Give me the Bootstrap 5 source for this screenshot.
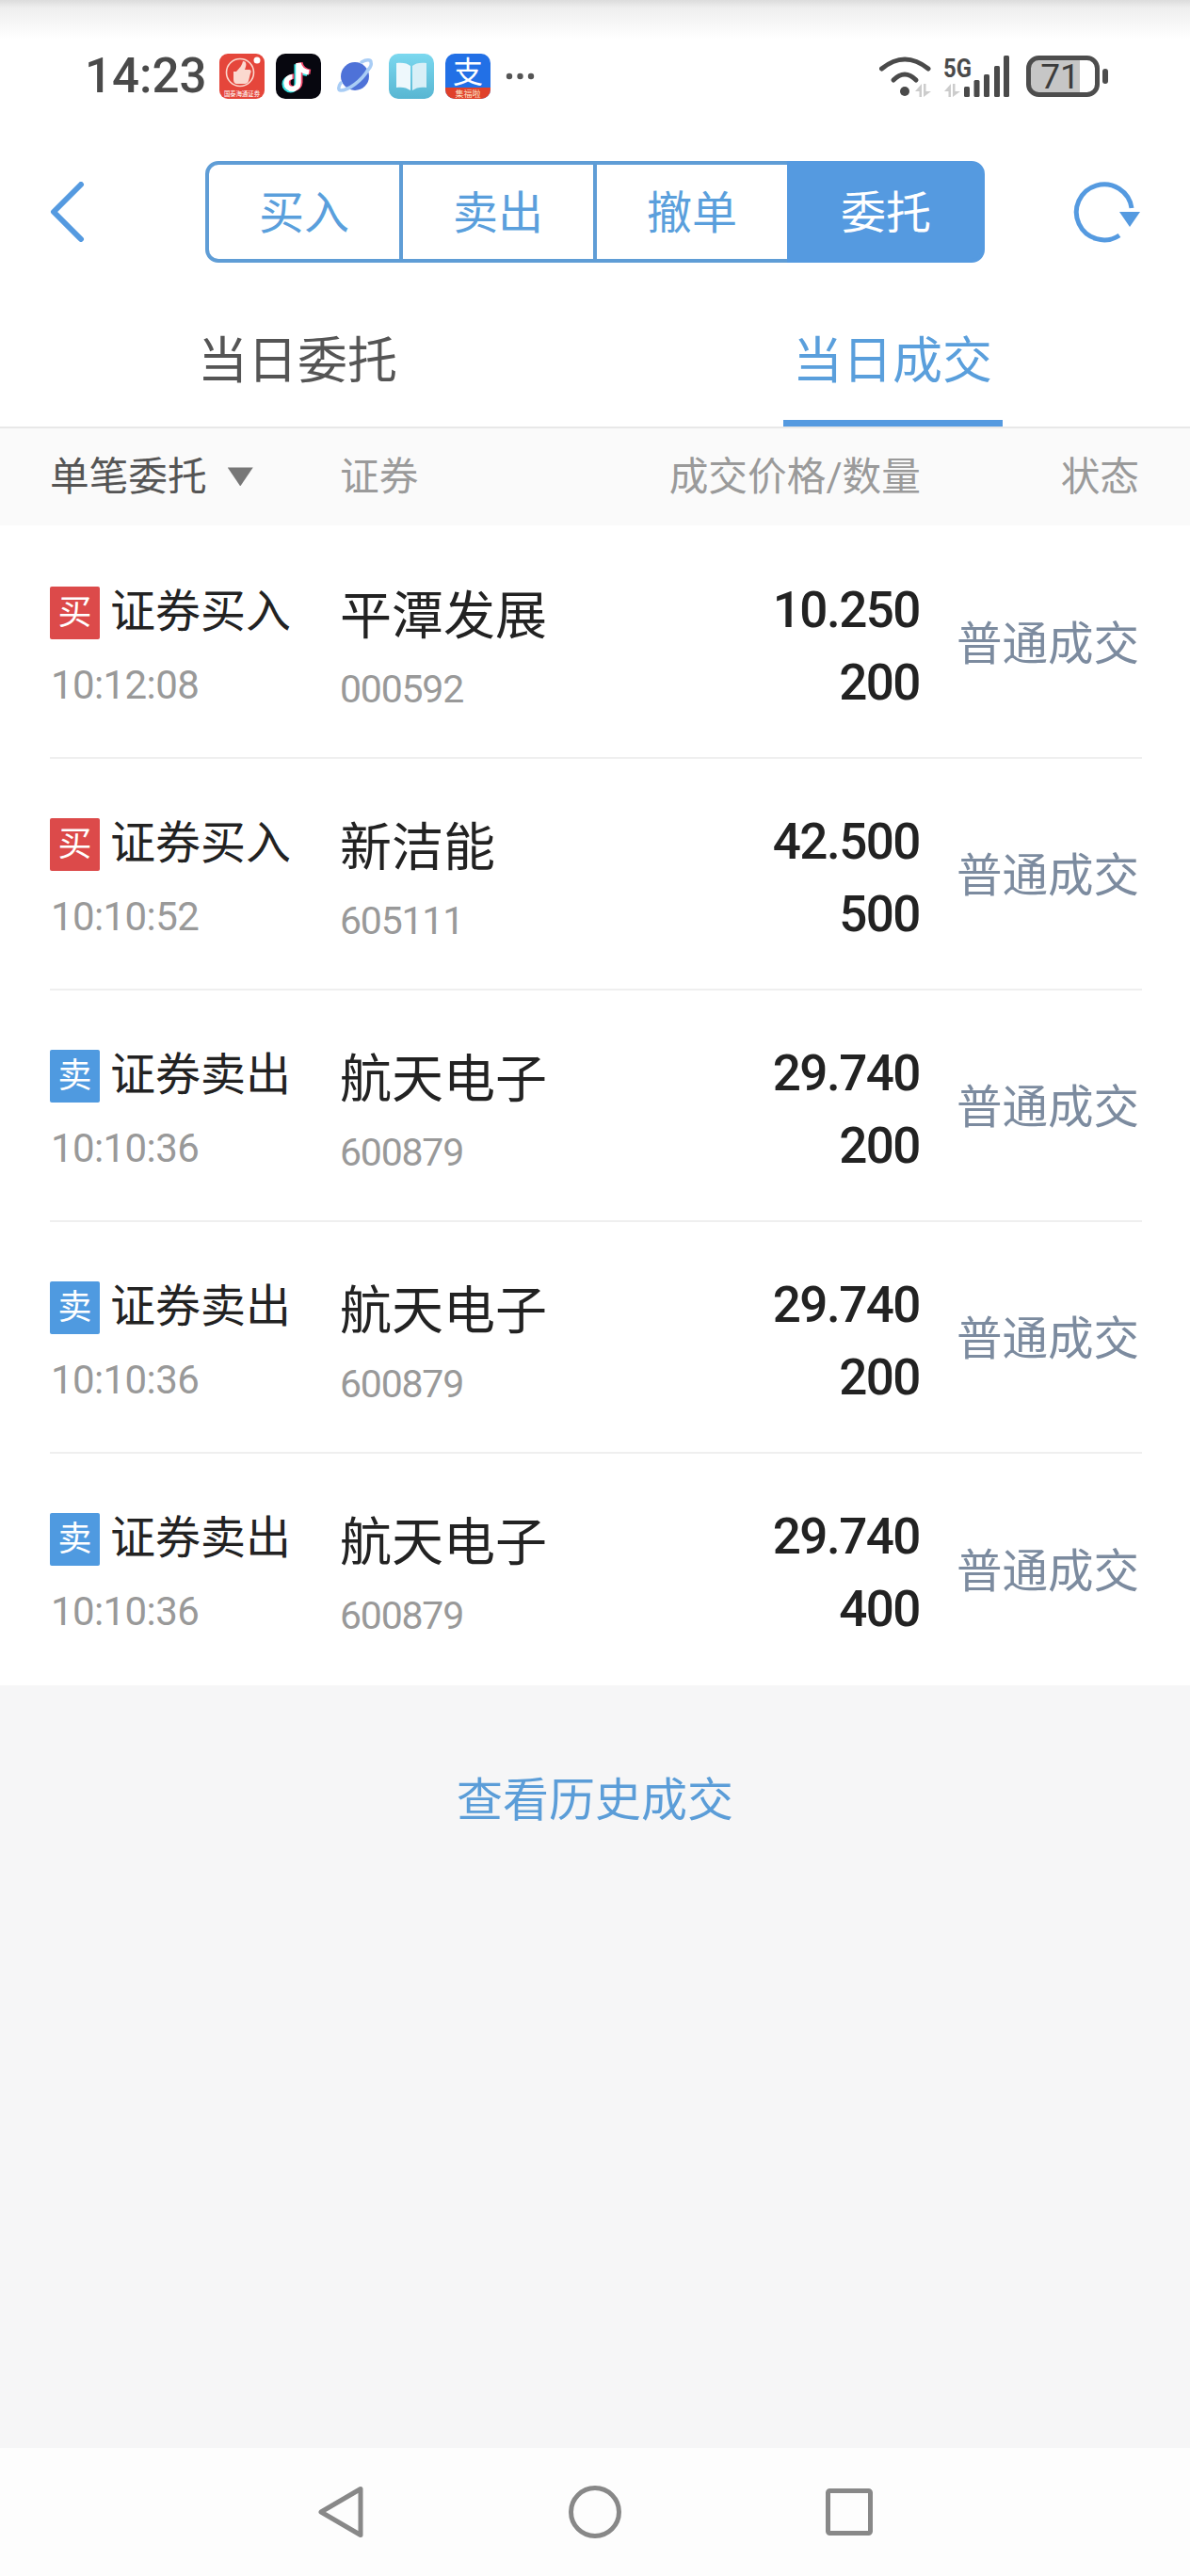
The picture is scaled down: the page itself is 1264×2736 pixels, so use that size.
<!DOCTYPE html>
<html lang="zh-CN">
<head>
  <meta charset="UTF-8" />
  <meta name="viewport" content="width=device-width, initial-scale=1.0" />
  <title>当日成交</title>
  <link href="https://cdn.jsdelivr.net/npm/bootstrap@5.3.0/dist/css/bootstrap.min.css" rel="stylesheet">
  <style>
    body {
      font-family: Roboto, "Noto Sans CJK SC", sans-serif;
      background-color: #f6f6f7;
      min-height: 2736px;
    }
    .status-strip {
      height: 162px;
      padding: 0 86px 0 90px;
      background: linear-gradient(#dcdcdc 0, #eeeeee 8px, #ffffff 42px);
    }
    .clock {
      font-size: 51px;
      font-weight: 500;
      line-height: 60px;
      color: #4a4a4a;
      width: 128px;
      margin-right: 15px;
      white-space: nowrap;
    }
    .app-icons { gap: 12px; }
    .dots { margin-left: 16px; }
    .signal-icon { margin-top: -3px; }
    .tool-strip {
      height: 126px;
      padding-left: 53px;
      background: #fff;
    }
    .back-arrow { margin-right: 128px; }
    .refresh-icon { margin-left: 93px; }
    .btn-group .btn.seg-btn {
      width: 210px;
      height: 108px;
      padding: 0;
      font-size: 48px;
      line-height: 104px;
      color: #5a9fdc;
      background: #fff;
      border: 4px solid #5f9dd6;
      border-radius: 14px;
    }
    .btn-group .btn.seg-btn + .btn.seg-btn { margin-left: -4px; }
    .btn-group .btn.seg-btn:not(:last-child) { border-top-right-radius: 0; border-bottom-right-radius: 0; }
    .btn-group .btn.seg-btn:not(:first-child) { border-top-left-radius: 0; border-bottom-left-radius: 0; }
    .btn-group .btn.seg-btn.active {
      color: #fff;
      background: #559ae0;
      border-color: #559ae0;
    }
    .day-tabs {
      background: #fff;
      border-bottom: 2px solid #e8e8e8;
      height: 167px;
    }
    .day-tabs .nav-link {
      padding: 60px 0 0;
      font-size: 53px;
      line-height: 72px;
      color: #555;
    }
    .day-tabs .nav-link span {
      display: inline-block;
      width: 233px;
      height: 105px;
      white-space: nowrap;
    }
    .day-tabs .nav-link.active { color: #5a9fdc; background: none; }
    .day-tabs .nav-link.active span { border-bottom: 7px solid #559ae0; }
    .head-band {
      height: 103px;
      padding: 2px 54px 0 53px;
      background: #fafafa;
      font-size: 41.7px;
      color: #9a9a9a;
    }
    .cell-type { width: 308px; }
    .cell-stock { width: 250px; }
    .cell-price { width: 366px; }
    .cell-state { width: 233px; }
    .head-band .cell-stock { width: 251px; }
    .head-band .cell-state { width: 232px; }
    .filter-label { color: #555; }
    .filter-caret {
      width: 27px;
      height: 20px;
      margin: -2px 0 0 22px;
      background: #777;
      clip-path: polygon(0 0, 100% 0, 50% 100%);
    }
    .trade-list {
      padding-top: 2px;
      background: #fff;
    }
    .trade-row {
      height: 246px;
      margin: 0 51px 0 53px;
      border-bottom: 2px solid #efefef;
    }
    .trade-row:last-child { border-bottom: 0; }
    .side-tag {
      width: 53px;
      height: 56px;
      margin-right: 11px;
      border-radius: 2px;
      color: #fff;
      font-size: 36px;
      line-height: 56px;
      text-align: center;
    }
    .tag-buy { background: #dc4a4a; }
    .tag-sell { background: #4f9ae0; }
    .type-line {
      height: 56px;
      margin-top: 63px;
      font-size: 48px;
      line-height: 53px;
      color: #222;
      white-space: nowrap;
    }
    .time-line {
      margin-top: 29px;
      padding-left: 1px;
      font-size: 42px;
      line-height: 40px;
      letter-spacing: -.6px;
      color: #999;
    }
    .stock-name {
      margin-top: 64px;
      font-size: 55px;
      line-height: 60px;
      color: #222;
      white-space: nowrap;
    }
    .stock-code {
      margin-top: 28px;
      font-size: 41px;
      line-height: 40px;
      letter-spacing: -1.2px;
      color: #999;
    }
    .price-line {
      font-size: 53px;
      line-height: 60px;
      font-weight: 500;
      letter-spacing: -1.5px;
      color: #222;
    }
    .price-line:first-child { margin-top: 58px; }
    .price-line + .price-line { margin-top: 17px; }
    .state-text {
      padding-top: 6px;
      font-size: 48.5px;
      line-height: 60px;
      color: #7c8b9f;
      white-space: nowrap;
    }
    .history-link {
      display: block;
      padding-top: 93px;
      font-size: 49px;
      line-height: 60px;
      text-align: center;
      text-decoration: none;
      color: #5b9dd8;
    }
    .sys-nav {
      height: 136px;
      background: #fdfdfd;
    }
    .sys-cell { width: 270px; }
  </style>
</head>
<body class="d-flex flex-column">

<div class="status-strip d-flex align-items-center">
  <div class="clock">14:23</div>
  <div class="app-icons d-flex align-items-center">
    <!-- 国泰海通 -->
    <svg width="48" height="48" viewBox="0 0 48 48">
      <rect width="48" height="48" rx="9" fill="#e5463b"/>
      <circle cx="22" cy="20" r="14.5" fill="none" stroke="#fbd9cf" stroke-width="1.6"/>
      <path d="M15 19h3c3-3 6-6 7-11 3 0 4 2 3 6l-1 3h5c2 0 2 3 1 4l-2 8c-.4 2-2 3-4 3H19c-3 0-4-2-4-5z" fill="#fbd9cf"/>
      <circle cx="40" cy="7" r="3.500" fill="#fff"/>
      <text x="24" y="45" font-size="6.400" text-anchor="middle" fill="#fff" textLength="38" lengthAdjust="spacingAndGlyphs">国泰海通证券</text>
    </svg>
    <!-- 抖音 -->
    <svg width="48" height="48" viewBox="0 0 48 48">
      <rect width="48" height="48" rx="10" fill="#07070f"/>
      <g fill="none" stroke-width="5.500">
        <path d="M24 10v21a6.500 6.500 0 1 1-6.500-6.500M24 10c1 6 5 9 11 10" stroke="#37e0e0" transform="translate(-1.800 1.200)"/>
        <path d="M24 10v21a6.500 6.500 0 1 1-6.500-6.500M24 10c1 6 5 9 11 10" stroke="#f5466b" transform="translate(1.800 -.6)"/>
        <path d="M24 10v21a6.500 6.500 0 1 1-6.500-6.500M24 10c1 6 5 9 11 10" stroke="#fff"/>
      </g>
    </svg>
    <!-- planet -->
    <svg width="48" height="48" viewBox="0 0 48 48">
      <circle cx="24" cy="24" r="15" fill="#4e72d8"/>
      <path d="M31 9C36 6 41 6 41 9c1 3-1 6-3 8" fill="none" stroke="#a9cdf5" stroke-width="3.500" stroke-linecap="round"/>
      <path d="M9 31c-3 4-3 8 0 8 8 0 22-10 29-22" fill="none" stroke="#a9cdf5" stroke-width="3.500" stroke-linecap="round"/>
    </svg>
    <!-- book -->
    <svg width="48" height="48" viewBox="0 0 48 48">
      <defs><linearGradient id="bookBg" x1="0" y1="0" x2="0" y2="1"><stop offset="0" stop-color="#7bd8ef"/><stop offset="1" stop-color="#58b6d2"/></linearGradient></defs>
      <rect width="48" height="48" rx="10" fill="url(#bookBg)"/>
      <path d="M8 10c6-1 12 0 15 3v26c-4-3-9-4-15-3z" fill="#eef8fc"/>
      <path d="M40 10c-6-1-12 0-15 3v26c4-3 9-4 15-3z" fill="#d8eff7"/>
    </svg>
    <!-- 支付宝 -->
    <svg width="48" height="48" viewBox="0 0 48 48">
      <rect width="48" height="48" rx="10" fill="#2270e6"/>
      <path d="M0 36h48v2a10 10 0 0 1-10 10H10A10 10 0 0 1 0 38z" fill="#e0402a"/>
      <text x="24" y="31" font-size="32" text-anchor="middle" fill="#fff">支</text>
      <text x="24" y="46" font-size="9" text-anchor="middle" fill="#fbe3c8">集福啦</text>
    </svg>
  </div>
  <svg class="dots" width="31" height="10" viewBox="0 0 31 10">
    <circle cx="4" cy="5" r="3.200" fill="#555"/><circle cx="15.500" cy="5" r="3.200" fill="#555"/><circle cx="27" cy="5" r="3.200" fill="#555"/>
  </svg>
  <div class="d-flex align-items-center ms-auto gap-3">
    <!-- wifi, 5G, bars -->
    <svg class="signal-icon" width="140" height="47" viewBox="0 -3 140 47">
      <g fill="none" stroke="#4a4a4a" stroke-width="5" stroke-linecap="round">
        <path d="M2.500 14Q27-6 52 14"/>
        <path d="M15 26Q27 14 39 26"/>
      </g>
      <circle cx="27" cy="38" r="5" fill="#4a4a4a"/>
      <path d="M45 30v14h-2.500v-6H38zM47 30h2.500v8H55l-8 6z" fill="#ccc"/>
      <path d="M76 30v14h-2.500v-6H69zM78 30h2.500v8H86l-8 6z" fill="#ccc"/>
      <text x="68" y="23" font-size="27" font-weight="700" fill="#4a4a4a" textLength="30" lengthAdjust="spacingAndGlyphs">5G</text>
      <g fill="#4a4a4a">
        <rect x="90" y="33" width="6" height="11" rx="1.500"/>
        <rect x="100.500" y="26" width="6" height="18" rx="1.500"/>
        <rect x="111" y="20" width="6" height="24" rx="1.500"/>
        <rect x="122" y="11" width="6" height="33" rx="1.500"/>
        <rect x="132" y="0" width="6" height="44" rx="1.500"/>
      </g>
    </svg>
    <!-- battery -->
    <svg width="88" height="44" viewBox="0 0 88 44">
      <rect x="5" y="5" width="52" height="34" fill="#c6c6c6"/>
      <rect x="2.500" y="2.500" width="73" height="39" rx="11" fill="none" stroke="#4d4d4d" stroke-width="5"/>
      <rect x="81" y="14" width="6" height="16" rx="3" fill="#4d4d4d"/>
      <text x="36" y="35" font-size="37" text-anchor="middle" fill="#3c3c3c">71</text>
    </svg>
  </div>
</div>

<div class="tool-strip d-flex align-items-center">
  <svg class="back-arrow" width="37" height="64" viewBox="0 0 37 64">
    <path d="M33 3L4 32l29 29" fill="none" stroke="#559ae0" stroke-width="6" stroke-linecap="round" stroke-linejoin="round"/>
  </svg>
  <div class="btn-group">
    <button class="btn seg-btn">买入</button>
    <button class="btn seg-btn">卖出</button>
    <button class="btn seg-btn">撤单</button>
    <button class="btn seg-btn active">委托</button>
  </div>
  <svg class="refresh-icon" width="72" height="70" viewBox="0 0 72 70">
    <path d="M50 60A29.500 29.500 0 1 1 63 31" fill="none" stroke="#559ae0" stroke-width="5"/>
    <path d="M50 35h22l-11 16z" fill="#559ae0"/>
  </svg>
</div>

<nav class="day-tabs nav nav-fill">
  <a class="nav-link" href="#"><span>当日委托</span></a>
  <a class="nav-link active" href="#"><span>当日成交</span></a>
</nav>

<div class="head-band d-flex align-items-center">
  <div class="cell-type d-flex align-items-center"><span class="filter-label">单笔委托</span><span class="filter-caret"></span></div>
  <div class="cell-stock">证券</div>
  <div class="cell-price text-end">成交价格/数量</div>
  <div class="cell-state text-end">状态</div>
</div>

<div class="trade-list" id="trade-list"></div>

<a class="history-link" href="#">查看历史成交</a>

<div class="sys-nav d-flex align-items-center justify-content-center mt-auto">
  <div class="sys-cell text-center">
    <svg width="50" height="56" viewBox="0 0 50 56">
      <path d="M46 3.500v49L4 28z" fill="none" stroke="#888" stroke-width="5" stroke-linejoin="round"/>
    </svg>
  </div>
  <div class="sys-cell text-center">
    <svg width="56" height="56" viewBox="0 0 56 56">
      <circle cx="28" cy="28" r="25.500" fill="none" stroke="#888" stroke-width="5"/>
    </svg>
  </div>
  <div class="sys-cell text-center">
    <svg width="50" height="50" viewBox="0 0 50 50">
      <rect x="2.500" y="2.500" width="45" height="45" rx="2" fill="none" stroke="#888" stroke-width="5"/>
    </svg>
  </div>
</div>

<script>
  const trades = [
    { side: 'buy', type: '证券买入', time: '10:12:08', name: '平潭发展', code: '000592', price: '10.250', qty: '200' },
    { side: 'buy', type: '证券买入', time: '10:10:52', name: '新洁能', code: '605111', price: '42.500', qty: '500' },
    { side: 'sell', type: '证券卖出', time: '10:10:36', name: '航天电子', code: '600879', price: '29.740', qty: '200' },
    { side: 'sell', type: '证券卖出', time: '10:10:36', name: '航天电子', code: '600879', price: '29.740', qty: '200' },
    { side: 'sell', type: '证券卖出', time: '10:10:36', name: '航天电子', code: '600879', price: '29.740', qty: '400' }
  ];

  const tradeList = document.getElementById('trade-list');

  trades.forEach(t => {
    const tag = t.side === 'buy' ? '<span class="side-tag tag-buy">买</span>' : '<span class="side-tag tag-sell">卖</span>';
    tradeList.insertAdjacentHTML('beforeend', `
      <div class="trade-row d-flex">
        <div class="cell-type">
          <div class="type-line d-flex">${tag}<span>${t.type}</span></div>
          <div class="time-line">${t.time}</div>
        </div>
        <div class="cell-stock">
          <div class="stock-name">${t.name}</div>
          <div class="stock-code">${t.code}</div>
        </div>
        <div class="cell-price text-end">
          <div class="price-line">${t.price}</div>
          <div class="price-line">${t.qty}</div>
        </div>
        <div class="cell-state text-end align-self-center state-text">普通成交</div>
      </div>
    `);
  });
</script>
<script src="https://cdn.jsdelivr.net/npm/bootstrap@5.3.0/dist/js/bootstrap.bundle.min.js"></script>
</body>
</html>
